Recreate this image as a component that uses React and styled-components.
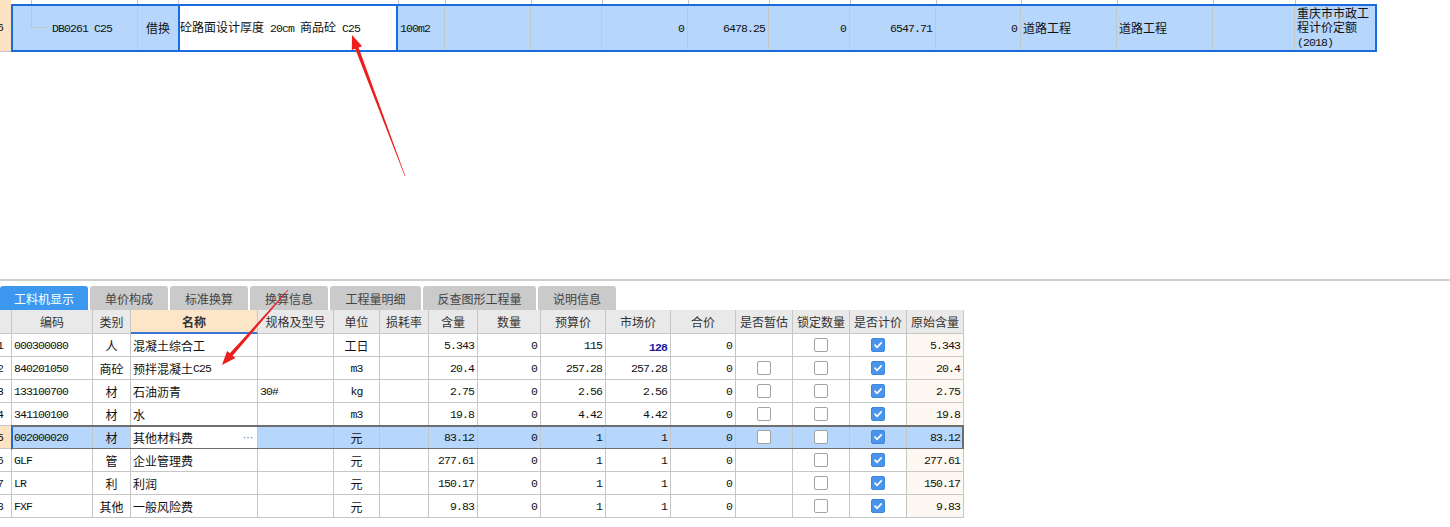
import React from 'react'
import styled, { createGlobalStyle } from 'styled-components'

const CJK = '"Noto Sans CJK SC", "Noto Sans", sans-serif'
const MONO = '"Liberation Mono", "Noto Sans CJK SC", monospace'
const LINE = '#c6c6c6'
const SEL_BG = '#b7d6fb'
const BLUE = '#1b6be0'

const GlobalStyle = createGlobalStyle`
  html, body { margin: 0; padding: 0; background: #fff; }
  body { font-family: ${CJK}; font-size: 12px; color: #111; }
`

// splits text into ascii (mono, SimSun-like) and CJK runs
const Asc = styled.span`
  font-family: ${MONO};
  font-size: 11.5px;
  letter-spacing: -0.9px;
  font-weight: ${p => (p.$bold ? 700 : 400)};
`
const Mixed = ({ text, bold }) =>
  text
    .split(/([ -~]+)/)
    .filter(Boolean)
    .map((s, i) =>
      /^[ -~]+$/.test(s) ? (
        <Asc key={i} $bold={bold}>{s}</Asc>
      ) : (
        <span key={i}>{s}</span>
      )
    )

const topCols = [
  { w: 125, kind: 'tree', text: 'DB0261 C25' },
  { w: 41, align: 'center', text: '借换' },
  { w: 220, kind: 'edit', text: '砼路面设计厚度 20cm 商品砼 C25' },
  { w: 47, text: '100m2' },
  { w: 86, text: '' },
  { w: 71, text: '' },
  { w: 86, align: 'right', text: '0' },
  { w: 81, align: 'right', text: '6478.25' },
  { w: 81, align: 'right', text: '0' },
  { w: 86, align: 'right', text: '6547.71' },
  { w: 85, align: 'right', text: '0' },
  { w: 96, text: '道路工程' },
  { w: 96, text: '道路工程' },
  { w: 82, text: '' },
  { w: 79, text: '重庆市市政工程计价定额(2018)' },
]

const tabs = [
  { label: '工料机显示', w: 88, active: true },
  { label: '单价构成', w: 78 },
  { label: '标准换算', w: 78 },
  { label: '换算信息', w: 78 },
  { label: '工程量明细', w: 91 },
  { label: '反查图形工程量', w: 113 },
  { label: '说明信息', w: 78 },
]

const cols = [
  { key: 'code', label: '编码', w: 81, align: 'left' },
  { key: 'type', label: '类别', w: 38, align: 'center' },
  { key: 'name', label: '名称', w: 127, align: 'left', accent: true },
  { key: 'spec', label: '规格及型号', w: 76, align: 'left' },
  { key: 'unit', label: '单位', w: 46, align: 'center' },
  { key: 'loss', label: '损耗率', w: 49, align: 'right' },
  { key: 'qty', label: '含量', w: 49, align: 'right' },
  { key: 'num', label: '数量', w: 63, align: 'right' },
  { key: 'budget', label: '预算价', w: 65, align: 'right' },
  { key: 'market', label: '市场价', w: 65, align: 'right' },
  { key: 'total', label: '合价', w: 65, align: 'right' },
  { key: 'est', label: '是否暂估', w: 57, check: true },
  { key: 'lock', label: '锁定数量', w: 57, check: true },
  { key: 'calc', label: '是否计价', w: 57, check: true },
  { key: 'orig', label: '原始含量', w: 57, align: 'right', tint: true },
]

const base = { spec: '', loss: '', num: '0', total: '0', lock: false, calc: true }
const rows = [
  { ...base, n: 1, code: '000300080', type: '人', name: '混凝土综合工', unit: '工日', qty: '5.343', budget: '115', market: '128', strong: true, est: null, orig: '5.343' },
  { ...base, n: 2, code: '840201050', type: '商砼', name: '预拌混凝土C25', unit: 'm3', qty: '20.4', budget: '257.28', market: '257.28', est: false, orig: '20.4' },
  { ...base, n: 3, code: '133100700', type: '材', name: '石油沥青', spec: '30#', unit: 'kg', qty: '2.75', budget: '2.56', market: '2.56', est: false, orig: '2.75' },
  { ...base, n: 4, code: '341100100', type: '材', name: '水', unit: 'm3', qty: '19.8', budget: '4.42', market: '4.42', est: false, orig: '19.8' },
  { ...base, n: 5, code: '002000020', type: '材', name: '其他材料费', unit: '元', qty: '83.12', budget: '1', market: '1', est: false, orig: '83.12', selected: true },
  { ...base, n: 6, code: 'GLF', type: '管', name: '企业管理费', unit: '元', qty: '277.61', budget: '1', market: '1', est: null, orig: '277.61' },
  { ...base, n: 7, code: 'LR', type: '利', name: '利润', unit: '元', qty: '150.17', budget: '1', market: '1', est: null, orig: '150.17' },
  { ...base, n: 8, code: 'FXF', type: '其他', name: '一般风险费', unit: '元', qty: '9.83', budget: '1', market: '1', est: null, orig: '9.83' },
]

const justify = a => (a === 'right' ? 'flex-end' : a === 'center' ? 'center' : 'flex-start')

function arrowPoints([x1, y1], [x2, y2], head = 14, hw = 11, w0 = 0.6, w1 = 3.6) {
  const len = Math.hypot(x2 - x1, y2 - y1)
  const ux = (x2 - x1) / len
  const uy = (y2 - y1) / len
  const nx = -uy
  const ny = ux
  const bx = x2 - ux * head
  const by = y2 - uy * head
  const pts = [
    [x1 + (nx * w0) / 2, y1 + (ny * w0) / 2],
    [bx + (nx * w1) / 2, by + (ny * w1) / 2],
    [bx + (nx * hw) / 2, by + (ny * hw) / 2],
    [x2, y2],
    [bx - (nx * hw) / 2, by - (ny * hw) / 2],
    [bx - (nx * w1) / 2, by - (ny * w1) / 2],
    [x1 - (nx * w0) / 2, y1 - (ny * w0) / 2],
  ]
  return pts.map(p => p.map(v => v.toFixed(1)).join(',')).join(' ')
}

const Check = ({ on }) => (
  <Box $on={on}>
    {on && (
      <svg width="10" height="10" viewBox="0 0 10 10">
        <path d="M2 5.2 L4.2 7.3 L8.2 2.9" fill="none" stroke="#fff" strokeWidth="1.7" strokeLinecap="round" strokeLinejoin="round" />
      </svg>
    )}
  </Box>
)

const App = () => (
  <Page>
    <GlobalStyle />
    <TopArea>
      <Strip>
        <StripNum />
        {topCols.map((c, i) => (
          <StripCell key={i} style={{ width: c.w + (i === 0 || i === topCols.length - 1 ? 2 : 0) }} $last={i === topCols.length - 1}>
            {c.kind === 'tree' && <TreeStem />}
          </StripCell>
        ))}
      </Strip>
      <TopRow>
        <RowNum $peach $h={48}>
          <Asc>6</Asc>
        </RowNum>
        <BlueRow>
          {topCols.map((c, i) => (
            <TopCell
              key={i}
              style={{ width: c.w }}
              $align={c.align}
              $edit={c.kind === 'edit'}
              $last={i === topCols.length - 1}
            >
              {c.kind === 'tree' && <Elbow />}
              <CellText $tree={c.kind === 'tree'}>
                <Mixed text={c.text} />
              </CellText>
            </TopCell>
          ))}
        </BlueRow>
      </TopRow>
    </TopArea>
    <Divider />
    <TabBar>
      {tabs.map(t => (
        <Tab key={t.label} $active={t.active} style={{ width: t.w }}>
          {t.label}
        </Tab>
      ))}
    </TabBar>
    <Grid>
      <HeadRow>
        <HeadNum />
        {cols.map(c => (
          <HeadCell key={c.key} style={{ width: c.w }} $accent={c.accent}>
            {c.label}
          </HeadCell>
        ))}
      </HeadRow>
      {rows.map(r => (
        <DataRow key={r.n}>
          <RowNum $peach={r.selected} $h={23} $grid>
            <Asc>{r.n}</Asc>
          </RowNum>
          <Cells $selected={r.selected}>
            {cols.map(c => {
              const v = r[c.key]
              const editing = r.selected && c.key === 'name'
              return (
                <Cell
                  key={c.key}
                  style={{ width: c.w }}
                  $align={c.check ? 'center' : c.align}
                  $bg={editing ? '#fff' : r.selected ? SEL_BG : c.tint ? '#fdf8f1' : '#fff'}
                >
                  {c.check ? (
                    v === null || v === undefined ? null : <Check on={v} />
                  ) : c.key === 'market' && r.strong ? (
                    <Strong>
                      <Mixed text={v} bold />
                    </Strong>
                  ) : (
                    <Mixed text={v} />
                  )}
                  {editing && <Dots>···</Dots>}
                </Cell>
              )
            })}
          </Cells>
        </DataRow>
      ))}
    </Grid>
    <Arrows width="1450" height="527" viewBox="0 0 1450 527">
      <polygon points={arrowPoints([405, 176], [352, 35])} fill="#ee1d1d" />
      <polygon points={arrowPoints([288, 290], [222, 365])} fill="#ee1d1d" />
    </Arrows>
  </Page>
)

export default App

const Page = styled.div`
  position: relative;
  width: 1450px;
  height: 527px;
  overflow: hidden;
  background: #fff;
`

const TopArea = styled.div`
  height: 279px;
`

const Strip = styled.div`
  display: flex;
  height: 4px;
`

const StripNum = styled.div`
  width: 11px;
  background: #fde3c1;
`

const StripCell = styled.div`
  box-sizing: border-box;
  height: 4px;
  border-right: ${p => (p.$last ? 'none' : `1px solid ${LINE}`)};
  display: flex;
`

const TreeStem = styled.span`
  margin-left: 20px;
  width: 1px;
  background: ${LINE};
`

const TopRow = styled.div`
  display: flex;
  height: 48px;
`

const RowNum = styled.div`
  box-sizing: border-box;
  width: ${p => (p.$grid ? 12 : 11)}px;
  height: ${p => p.$h}px;
  flex-shrink: 0;
  display: flex;
  align-items: center;
  justify-content: flex-end;
  padding-right: 8px;
  overflow: hidden;
  background: ${p => (p.$peach ? '#fde3c1' : '#fff')};
  border-right: ${p => (p.$grid ? `1px solid ${LINE}` : 'none')};
  border-bottom: 1px solid ${LINE};
  white-space: nowrap;
`

const BlueRow = styled.div`
  box-sizing: border-box;
  width: 1366px;
  height: 48px;
  display: flex;
  border: 2px solid ${BLUE};
  background: ${SEL_BG};
`

const TopCell = styled.div`
  box-sizing: border-box;
  flex-shrink: 0;
  height: 44px;
  display: flex;
  align-items: center;
  justify-content: ${p => justify(p.$align)};
  padding: ${p => (p.$align === 'right' ? '0 3px 0 0' : p.$edit ? '0' : '0 2px')};
  line-height: 14px;
  background: ${p => (p.$edit ? '#fff' : 'transparent')};
  border-right: ${p => (p.$edit ? `2px solid ${BLUE}` : p.$last ? 'none' : `1px solid ${LINE}`)};
  border-left: ${p => (p.$edit ? `2px solid ${BLUE}` : 'none')};
  margin-left: ${p => (p.$edit ? '-1px' : '0')};
`

const Elbow = styled.span`
  align-self: flex-start;
  margin-left: 16px;
  width: 15px;
  height: 21px;
  border-left: 1px solid ${LINE};
  border-bottom: 1px solid ${LINE};
  flex-shrink: 0;
`

const CellText = styled.span`
  margin-left: ${p => (p.$tree ? '5px' : '0')};
  margin-top: -1px;
`

const Divider = styled.div`
  height: 2px;
  background: #cfcfcf;
`

const TabBar = styled.div`
  display: flex;
  gap: 2px;
  padding-top: 5px;
  height: 24px;
`

const Tab = styled.div`
  box-sizing: border-box;
  height: 24px;
  display: flex;
  align-items: center;
  justify-content: center;
  border-radius: 3px 3px 0 0;
  background: ${p => (p.$active ? '#3c98ef' : '#cacaca')};
  color: ${p => (p.$active ? '#fff' : '#444')};
  font-size: 12px;
`

const Grid = styled.div`
  display: flex;
  flex-direction: column;
`

const HeadRow = styled.div`
  display: flex;
  height: 24px;
`

const HeadNum = styled.div`
  box-sizing: border-box;
  width: 12px;
  background: #e9e9e9;
  border-right: 1px solid ${LINE};
  border-bottom: 1px solid ${LINE};
`

const HeadCell = styled.div`
  box-sizing: border-box;
  flex-shrink: 0;
  display: flex;
  align-items: center;
  justify-content: center;
  background: ${p => (p.$accent ? '#fde5c8' : '#e9e9e9')};
  border-right: 1px solid ${LINE};
  border-bottom: ${p => (p.$accent ? '2px solid #3a74d4' : `1px solid ${LINE}`)};
  font-weight: ${p => (p.$accent ? 700 : 400)};
  color: #333;
  white-space: nowrap;
`

const DataRow = styled.div`
  display: flex;
  height: 23px;
`

const Cells = styled.div`
  display: flex;
  position: relative;
  &::after {
    content: '';
    display: ${p => (p.$selected ? 'block' : 'none')};
    position: absolute;
    inset: -1px 0 -1px -1px;
    border: 2px solid #6e6e6e;
    border-left-color: ${BLUE};
    pointer-events: none;
  }
`

const Cell = styled.div`
  box-sizing: border-box;
  flex-shrink: 0;
  height: 23px;
  display: flex;
  align-items: center;
  justify-content: ${p => justify(p.$align)};
  padding: ${p => (p.$align === 'right' ? '0 3px 0 0' : p.$align === 'left' ? '0 0 0 2px' : '0')};
  background: ${p => p.$bg};
  border-right: 1px solid ${LINE};
  border-bottom: 1px solid ${LINE};
  white-space: nowrap;
  overflow: hidden;
`

const Strong = styled.span`
  color: #1b1ba0;
`

const Dots = styled.span`
  margin-left: auto;
  margin-right: 4px;
  color: #6a7fa3;
  font-family: "Liberation Sans", sans-serif;
  font-size: 12px;
  letter-spacing: -0.5px;
`

const Box = styled.span`
  box-sizing: border-box;
  width: 14px;
  height: 14px;
  border-radius: 2px;
  border: 1px solid ${p => (p.$on ? '#3b88e0' : '#a2a2a2')};
  background: ${p => (p.$on ? '#4a95ea' : '#fff')};
  display: inline-flex;
  align-items: center;
  justify-content: center;
`

const Arrows = styled.svg`
  position: absolute;
  top: 0;
  left: 0;
  pointer-events: none;
`
